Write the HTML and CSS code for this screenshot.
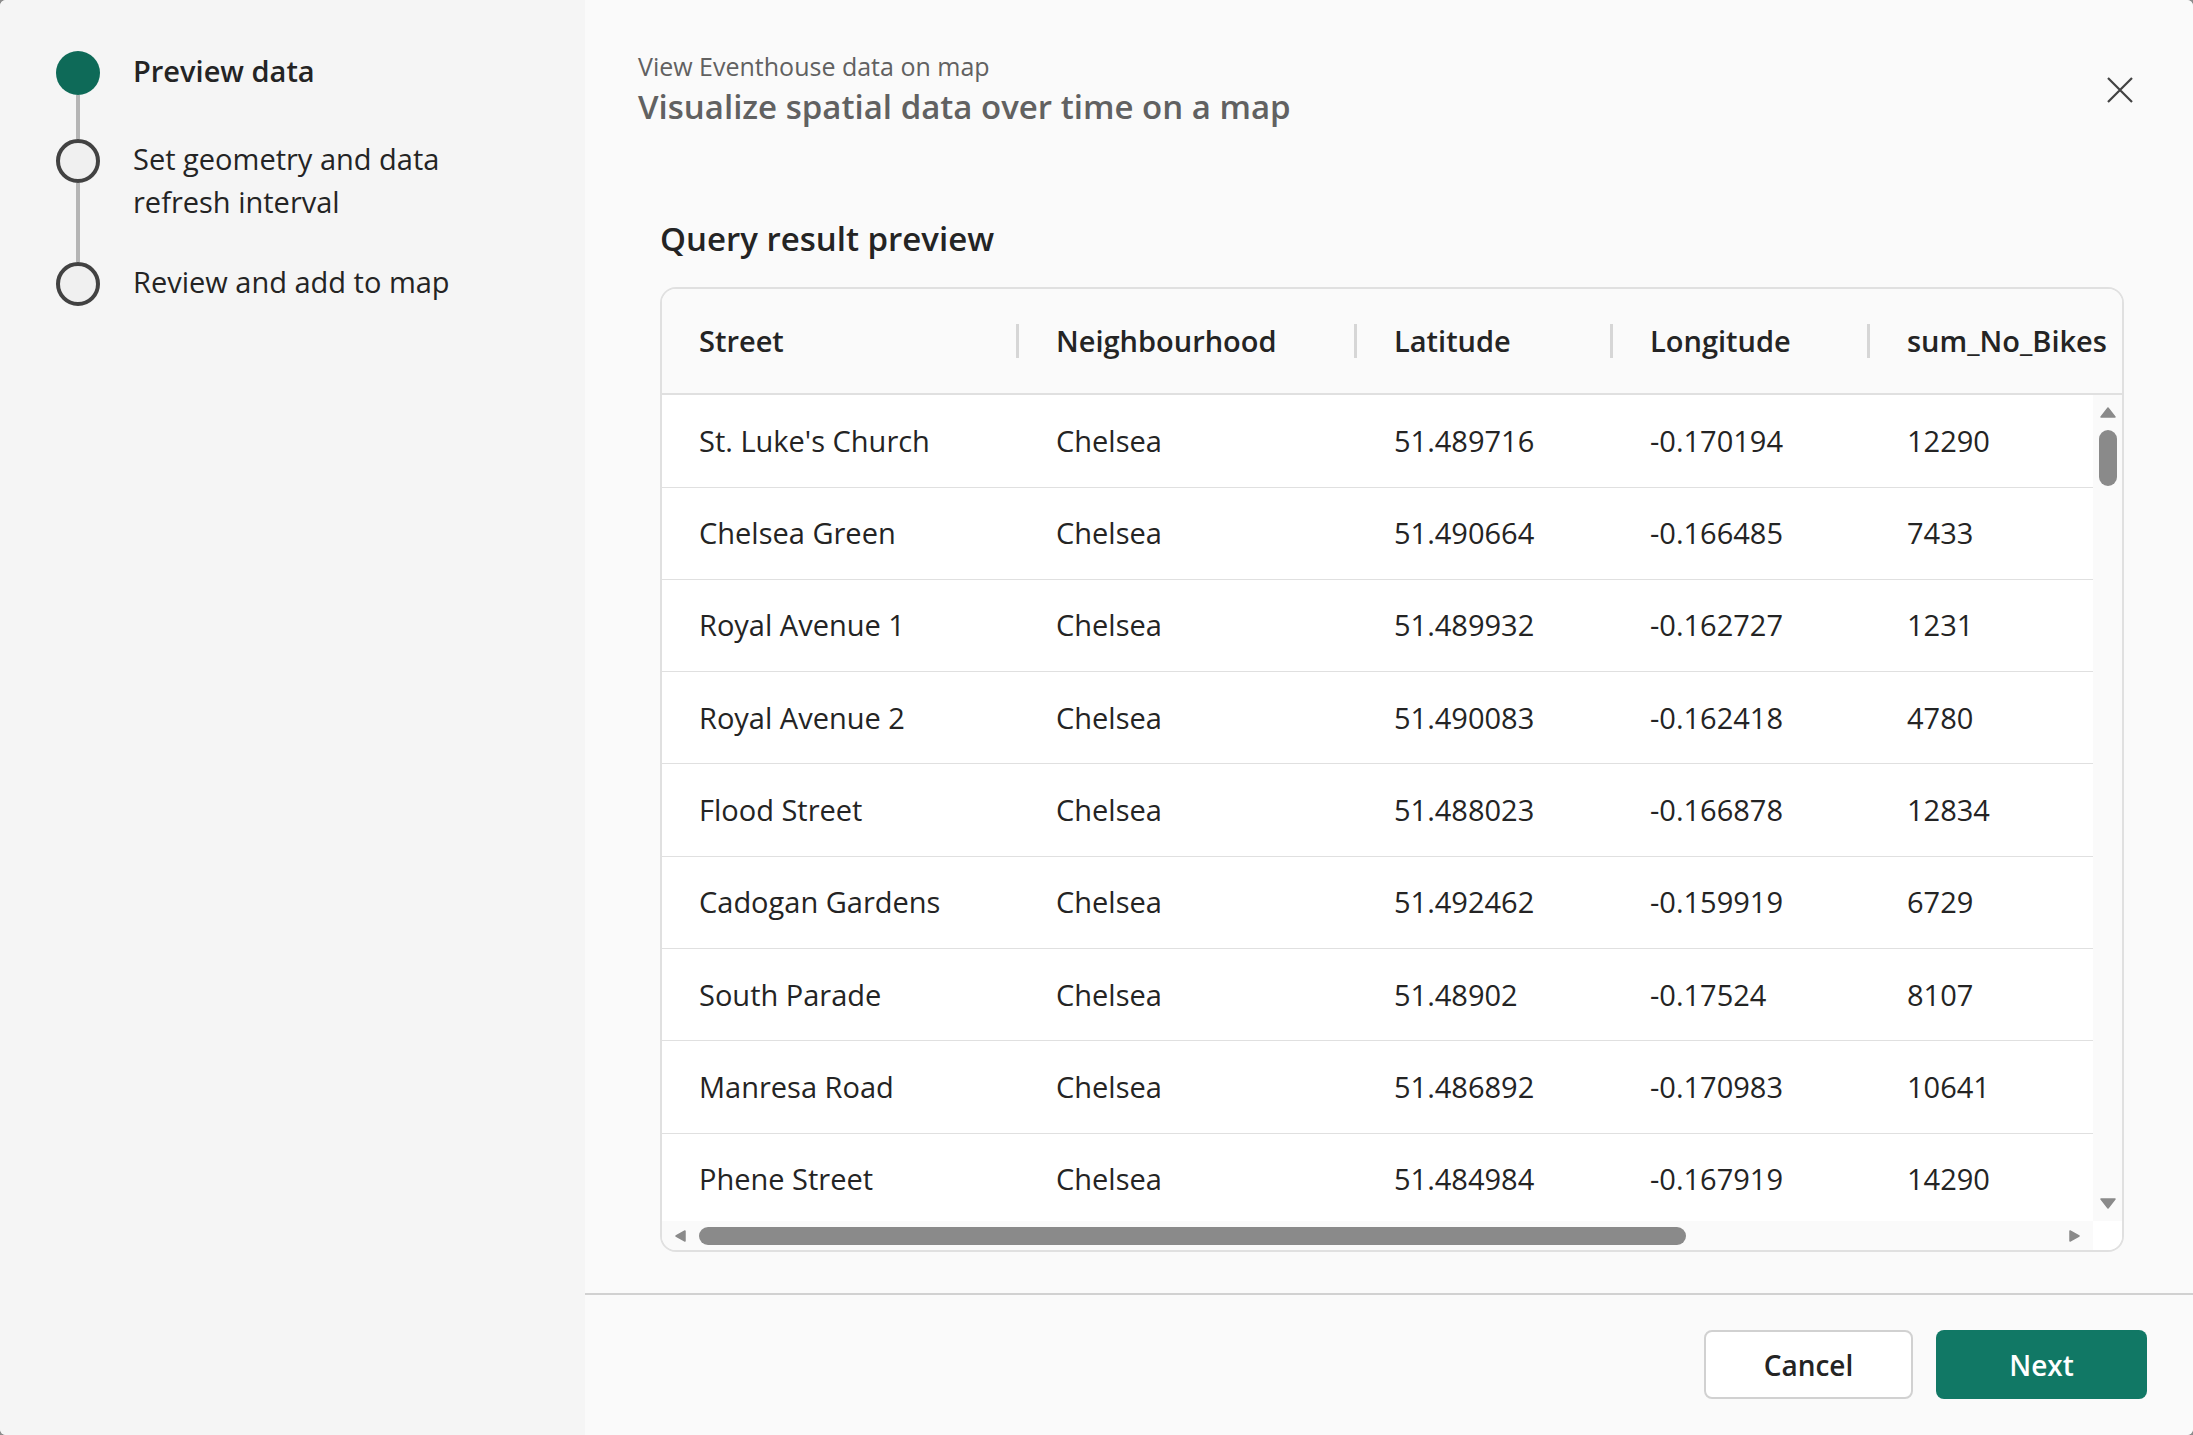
FILE: index.html
```html
<!DOCTYPE html>
<html lang="en">
<head>
<meta charset="utf-8">
<title>View Eventhouse data on map</title>
<link rel="stylesheet" href="styles.css">
</head>
<body>
<div class="dialog">
  <aside class="sidebar">
    <ol class="steps">
      <li class="step step--active">
        <div class="step-marker"><span class="dot"></span><span class="connector"></span></div>
        <div class="step-label">Preview data</div>
      </li>
      <li class="step">
        <div class="step-marker"><span class="dot"></span><span class="connector"></span></div>
        <div class="step-label">Set geometry and data refresh interval</div>
      </li>
      <li class="step">
        <div class="step-marker"><span class="dot"></span></div>
        <div class="step-label">Review and add to map</div>
      </li>
    </ol>
  </aside>
  <main class="main">
    <header class="header">
      <div class="titles">
        <div class="eyebrow">View Eventhouse data on map</div>
        <h1 class="title">Visualize spatial data over time on a map</h1>
      </div>
      <button class="close" type="button" aria-label="Close">
        <svg width="26" height="26" viewBox="0 0 26 26"><path d="M1 1 L25 25 M25 1 L1 25" stroke="#424242" stroke-width="2.2" fill="none"/></svg>
      </button>
    </header>
    <section class="content">
      <h2 class="section-title">Query result preview</h2>
      <div class="table-card">
        <div class="thead">
          <div class="th">Street</div>
          <div class="th">Neighbourhood</div>
          <div class="th">Latitude</div>
          <div class="th">Longitude</div>
          <div class="th th--last">sum_No_Bikes</div>
        </div>
        <div class="tbody">
          <div class="rows">
            <div class="tr"><div class="td">St. Luke's Church</div><div class="td">Chelsea</div><div class="td">51.489716</div><div class="td">-0.170194</div><div class="td">12290</div></div>
            <div class="tr"><div class="td">Chelsea Green</div><div class="td">Chelsea</div><div class="td">51.490664</div><div class="td">-0.166485</div><div class="td">7433</div></div>
            <div class="tr"><div class="td">Royal Avenue 1</div><div class="td">Chelsea</div><div class="td">51.489932</div><div class="td">-0.162727</div><div class="td">1231</div></div>
            <div class="tr"><div class="td">Royal Avenue 2</div><div class="td">Chelsea</div><div class="td">51.490083</div><div class="td">-0.162418</div><div class="td">4780</div></div>
            <div class="tr"><div class="td">Flood Street</div><div class="td">Chelsea</div><div class="td">51.488023</div><div class="td">-0.166878</div><div class="td">12834</div></div>
            <div class="tr"><div class="td">Cadogan Gardens</div><div class="td">Chelsea</div><div class="td">51.492462</div><div class="td">-0.159919</div><div class="td">6729</div></div>
            <div class="tr"><div class="td">South Parade</div><div class="td">Chelsea</div><div class="td">51.48902</div><div class="td">-0.17524</div><div class="td">8107</div></div>
            <div class="tr"><div class="td">Manresa Road</div><div class="td">Chelsea</div><div class="td">51.486892</div><div class="td">-0.170983</div><div class="td">10641</div></div>
            <div class="tr"><div class="td">Phene Street</div><div class="td">Chelsea</div><div class="td">51.484984</div><div class="td">-0.167919</div><div class="td">14290</div></div>
          </div>
          <div class="vscroll">
            <svg class="arrow arrow--up" width="16" height="11" viewBox="0 0 16 11"><path d="M8 1 L15 10 L1 10 Z" fill="#8a8a8a" stroke="#8a8a8a" stroke-width="1.5" stroke-linejoin="round"/></svg>
            <div class="vthumb"></div>
            <svg class="arrow arrow--down" width="16" height="11" viewBox="0 0 16 11"><path d="M1 1 L15 1 L8 10 Z" fill="#8a8a8a" stroke="#8a8a8a" stroke-width="1.5" stroke-linejoin="round"/></svg>
          </div>
        </div>
        <div class="hscroll">
          <div class="htrack">
            <svg class="arrow arrow--left" width="11" height="12" viewBox="0 0 11 12"><path d="M1 6 L10 1 L10 11 Z" fill="#8a8a8a" stroke="#8a8a8a" stroke-width="1.5" stroke-linejoin="round"/></svg>
            <div class="hthumb"></div>
            <svg class="arrow arrow--right" width="11" height="12" viewBox="0 0 11 12"><path d="M1 1 L10 6 L1 11 Z" fill="#8a8a8a" stroke="#8a8a8a" stroke-width="1.5" stroke-linejoin="round"/></svg>
          </div>
          <div class="corner"></div>
        </div>
      </div>
    </section>
    <footer class="footer">
      <button class="btn btn--secondary" type="button">Cancel</button>
      <button class="btn btn--primary" type="button">Next</button>
    </footer>
  </main>
</div>
</body>
</html>
```
FILE: styles.css
```css
html, body {
  margin: 0;
  padding: 0;
  height: 100%;
}

body {
  background: #8c8c8c;
  font-family: "Open Sans", "Noto Sans", sans-serif;
  color: #242424;
}

.dialog {
  display: flex;
  height: 100vh;
  border-radius: 6px;
  overflow: hidden;
  background: #fafafa;
}

/* ---------- Sidebar / stepper ---------- */
.sidebar {
  width: 585px;
  flex: none;
  background: #f5f5f5;
}

.steps {
  list-style: none;
  margin: 0;
  padding: 49px 0 0 56px;
}

.step {
  display: flex;
  gap: 33px;
  min-height: 88px;
}

.step-marker {
  width: 44px;
  flex: none;
  display: flex;
  flex-direction: column;
  align-items: center;
}

.dot {
  width: 44px;
  height: 44px;
  margin-top: 2px;
  box-sizing: border-box;
  border-radius: 50%;
  border: 4px solid #424242;
  background: #f0f0f0;
  flex: none;
}

.step--active .dot {
  border: none;
  background: #0e6a58;
}

.connector {
  width: 4px;
  flex: 1;
  margin-bottom: -2px;
  background: #b5b5b5;
}

.step-label {
  width: 330px;
  font-size: 29px;
  line-height: 43px;
  padding-bottom: 37px;
  color: #242424;
}

.step--active .step-label {
  font-weight: 600;
}

/* ---------- Main ---------- */
.main {
  flex: 1;
  display: flex;
  flex-direction: column;
  min-width: 0;
  background: #fafafa;
}

.header {
  display: flex;
  justify-content: space-between;
  align-items: flex-start;
  padding: 49px 51px 0 53px;
}

.eyebrow {
  font-size: 25px;
  line-height: 35px;
  color: #616161;
}

.title {
  margin: 0;
  font-size: 33px;
  line-height: 46.7px;
  font-weight: 600;
  color: #616161;
}

.close {
  width: 44px;
  height: 44px;
  margin-top: 19px;
  padding: 0;
  border: none;
  background: transparent;
  display: flex;
  align-items: center;
  justify-content: center;
}

.content {
  padding: 0 69px 0 75px;
}

.section-title {
  margin: 85.5px 0 25px;
  font-size: 33px;
  line-height: 46px;
  font-weight: 600;
  color: #242424;
}

/* ---------- Table ---------- */
.table-card {
  border: 2px solid #e0e0e0;
  border-radius: 16px;
  overflow: hidden;
  background: #ffffff;
}

.thead,
.tr {
  display: grid;
  grid-template-columns: 357px 338px 256px 257px 320px;
  align-items: center;
}

.thead {
  height: 104px;
  background: #fafafa;
  border-bottom: 2px solid #e0e0e0;
  overflow: hidden;
}

.th {
  position: relative;
  padding-left: 37px;
  font-size: 29px;
  font-weight: 600;
  white-space: nowrap;
  color: #242424;
  line-height: 44px;
}

.th::after {
  content: "";
  position: absolute;
  right: 0;
  top: 5px;
  width: 3px;
  height: 34px;
  background: #d6d6d6;
}

.th--last::after {
  display: none;
}

.tbody {
  display: flex;
  height: 826px;
}

.rows {
  flex: 1;
  overflow: hidden;
  min-width: 0;
}

.tr {
  height: 92.3px;
  box-sizing: border-box;
  border-bottom: 1.5px solid #e0e0e0;
}

.td {
  padding-left: 37px;
  font-size: 29px;
  line-height: 44px;
  white-space: nowrap;
  color: #242424;
}

.vscroll {
  width: 29px;
  flex: none;
  background: #fafafa;
  display: flex;
  flex-direction: column;
  align-items: center;
}

.arrow {
  display: block;
  flex: none;
}

.arrow--up {
  margin-top: 12px;
}

.vthumb {
  width: 18px;
  height: 56px;
  margin-top: 12px;
  border-radius: 9px;
  background: #8a8a8a;
}

.arrow--down {
  margin-top: auto;
  margin-bottom: 12px;
}

.hscroll {
  display: flex;
  height: 29px;
}

.htrack {
  flex: 1;
  display: flex;
  align-items: center;
  background: #fafafa;
  padding: 0 13px;
}

.hthumb {
  width: 987px;
  height: 18px;
  margin-left: 13px;
  border-radius: 9px;
  background: #8a8a8a;
}

.arrow--right {
  margin-left: auto;
}

.corner {
  width: 29px;
  flex: none;
  background: #ffffff;
}

/* ---------- Footer ---------- */
.footer {
  margin-top: auto;
  border-top: 2px solid #d1d1d1;
  display: flex;
  justify-content: flex-end;
  gap: 23px;
  padding: 35px 46px 36px 0;
}

.btn {
  height: 69px;
  border-radius: 8px;
  font-family: "Open Sans", "Noto Sans", sans-serif;
  font-size: 28px;
  font-weight: 600;
  padding: 0;
}

.btn--secondary {
  width: 209px;
  background: #ffffff;
  border: 2px solid #d1d1d1;
  color: #242424;
}

.btn--primary {
  width: 211px;
  background: #117865;
  border: none;
  color: #ffffff;
}
```
